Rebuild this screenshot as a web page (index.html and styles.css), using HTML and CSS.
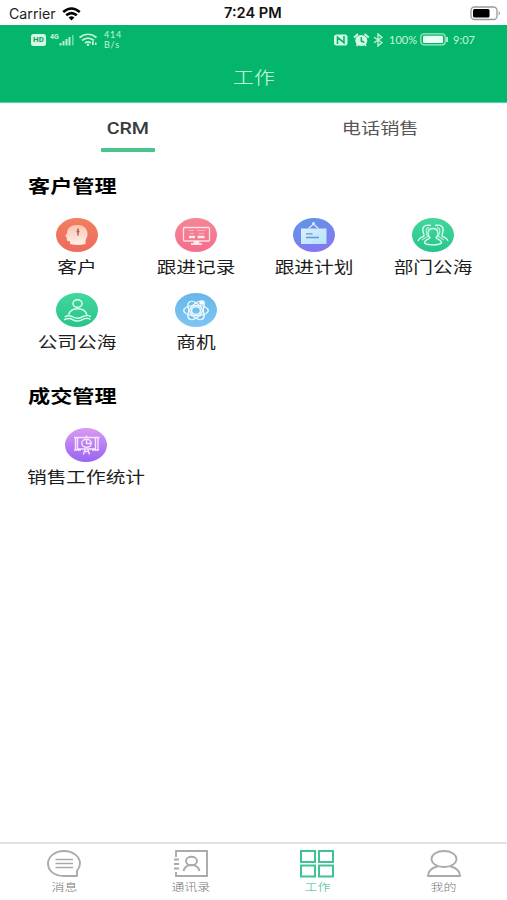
FILE: index.html
```
<!DOCTYPE html>
<html lang="zh-CN">
<head>
<meta charset="utf-8">
<title>工作</title>
<link rel="stylesheet" href="styles.css">
</head>
<body>
<div class="carrier-bar">
  <div class="carrier"><span>Carrier</span>
    <svg width="19" height="14" viewBox="0 0 19 14" fill="none" stroke="#000" stroke-width="2.6"><path d="M1.2 5Q9.5-2 17.800 5M4.200 8.300Q9.500 3.800 14.800 8.300"/><path d="M6.600 10.400Q9.500 8 12.400 10.400L9.500 13.400Z" fill="#000" stroke="none"/></svg>
  </div>
  <div class="clock">7:24 PM</div>
  <div class="power">
    <svg width="31" height="15" viewBox="0 0 31 15"><rect x="1" y="1" width="26" height="12.5" rx="3.5" fill="#fff" stroke="#999" stroke-width="1.3"/><rect x="3" y="3" width="16.5" height="8.5" rx="1.5" fill="#000"/><path d="M28.7 4.8q2.4 2.4 0 4.8z" fill="#999"/></svg>
  </div>
</div>
<header class="header">
  <div class="phone-bar">
    <span class="hd">HD</span>
    <span class="net">4G</span>
    <svg class="signals" width="40" height="16" viewBox="27 0 40 16">
      <g fill="#b9efd3"><rect x="27.5" y="11" width="2" height="2.5"/><rect x="30.5" y="9" width="2" height="4.5"/><rect x="33.5" y="7" width="2" height="6.5"/><rect x="36.5" y="5" width="2" height="8.5"/><rect x="40" y="3" width="1.6" height="10.5" opacity=".6"/></g>
      <path d="M47.500 5.500Q56-1 64.500 5.500M50 8.500Q56 3.800 62 8.500M53 11Q56 8.800 59 11" fill="none" stroke="#c8f4dc" stroke-width="1.7"/><circle cx="56" cy="12.800" r="1.300" fill="#c8f4dc"/><path d="M60 13V9.500h1.800V13M63 13V10.500h1.500V13" fill="#c8f4dc"/>
    </svg>
    <div class="rate"><span>414</span><span>B/s</span></div>
    <svg class="device" width="50" height="14" viewBox="0 0 50 14">
      <g fill="#d5f7e5"><rect x="0" y="1.5" width="13.5" height="11" rx="2.5"/><ellipse cx="27.3" cy="7.5" rx="6" ry="5.5"/><path d="M20 4.500 24 1M30.500 1l4.300 3.500M22.500 13l1.500-2M32 13l-1.500-2" stroke="#d5f7e5" stroke-width="1.8"/></g>
      <path d="M3.500 11V4.300l6.500 5.400V3M27.300 4.200V8l3 1.500" stroke="#04b66b" stroke-width="1.6" fill="none"/>
      <path d="M40 4.200l8 5.300-4 3.500V1l4 3.500-8 5.200" fill="none" stroke="#c8f4dc" stroke-width="1.3"/>
    </svg>
    <span class="percent">100%</span>
    <svg class="cell" width="29" height="13" viewBox="0 0 29 13"><rect x=".8" y=".8" width="24.4" height="11" rx="3" fill="none" stroke="#a5e9c7" stroke-width="1.2"/><rect x="3" y="2.7" width="20" height="7.3" rx="1" fill="#eafff4"/><path d="M27 4v5" stroke="#c8f4dc" stroke-width="1.7"/></svg>
    <span class="time">9:07</span>
  </div>
  <h1 class="title"><span class="wide">工作</span></h1>
</header>
<nav class="tabs">
  <div class="tab tab-active"><span class="wide">CRM</span></div>
  <div class="tab"><span class="wide">电话销售</span></div>
</nav>
<main class="content">
  <section>
    <h2><span class="wide">客户管理</span></h2>
    <div class="grid">
      <div class="item">
        <svg class="icon" viewBox="0 0 42 34"><defs><linearGradient id="g1" x2="0" y2="1"><stop stop-color="#f0805e"/><stop offset="1" stop-color="#ed6b5e"/></linearGradient><linearGradient id="head" x2="0" y2="1"><stop stop-color="#f9c4b2"/><stop offset="1" stop-color="#fff0e8"/></linearGradient></defs><ellipse cx="21" cy="17" rx="21" ry="17" fill="url(#g1)"/><path d="M14 26v-3q-3 1-3.300-2l0-2-1.700-.8 2-3C11 9.500 16 6.500 22 7c7 .5 10 5 9.500 10-.3 2.500-2 4-2 6.500V26q-8 2-15.500 0z" fill="url(#head)"/><path d="M22 10.500v7M20.500 13.500h3" fill="none" stroke="#a8645c" stroke-width="1.500"/></svg>
        <span class="wide">客户</span></div>
      <div class="item">
        <svg class="icon" viewBox="0 0 42 34"><defs><linearGradient id="g2" x2="0" y2="1"><stop stop-color="#f58794"/><stop offset="1" stop-color="#f56d8d"/></linearGradient></defs><ellipse cx="21" cy="17" rx="21" ry="17" fill="url(#g2)"/><rect x="8.500" y="9.500" width="26" height="13.500" rx="1" fill="none" stroke="#ffe0e6" stroke-width="1.300"/><path d="M19 23h5l.7 2.800h-6.400zM16 25.300h11V27H16z" fill="#ffe9ed"/><path d="M14 19h6M22.500 19h7" stroke="#ffe9ed" stroke-width="2.500"/><path d="M14 12.500h5M22 12.500h8M15 15.500h4M24 15.500h5" stroke="#f9b5c1" stroke-width="1.200"/></svg>
        <span class="wide">跟进记录</span></div>
      <div class="item">
        <svg class="icon" viewBox="0 0 42 34"><defs><linearGradient id="g3" x2=".4" y2="1"><stop stop-color="#5c98e6"/><stop offset="1" stop-color="#8478f0"/></linearGradient><linearGradient id="board" x2="1" y2="1"><stop stop-color="#d9f0ff"/><stop offset="1" stop-color="#b7e2fb"/></linearGradient></defs><ellipse cx="21" cy="17" rx="21" ry="17" fill="url(#g3)"/><path d="M15.500 10.500 20.500 6l5 4.500" fill="none" stroke="#d7edff" stroke-width="1.300"/><circle cx="20.500" cy="5.500" r="1.500" fill="#d7edff"/><path d="M8 10.500h25.500V26H8z" fill="url(#board)"/><path d="M13 15.800h6.500M13 19.500h13" stroke="#6798cc" stroke-width="1.300"/></svg>
        <span class="wide">跟进计划</span></div>
      <div class="item">
        <svg class="icon" viewBox="0 0 42 34"><defs><linearGradient id="g4" x2="0" y2="1"><stop stop-color="#43d79c"/><stop offset="1" stop-color="#27c58b"/></linearGradient></defs><ellipse cx="21" cy="17" rx="21" ry="17" fill="url(#g4)"/><g fill="none" stroke="#ddfff0" stroke-width="1.300"><path d="M18 19.500c-3-2-3-9 3-9s6 7 3 9c0 2 5.500 1.500 5.500 5.500-3 2.500-14 2.500-17 0 0-4 5.500-3.500 5.500-5.500z"/><path d="M19 7.500C13 6 10 9 11 13.500c.4 2 1.500 3 1 4.500-1.500 1.500-5 1.500-6 5M23 7.500c6-1.500 9 1.500 8 6-.4 2-1.500 3-1 4.500 1.500 1.500 5 1.500 6 5"/><path d="M17 9.500c-3.500.5-3.500 5-1.500 9l-5.500 3.500M25 9.500c3.500.5 3.500 5 1.500 9l5.500 3.500" opacity=".7"/></g></svg>
        <span class="wide">部门公海</span></div>
      <div class="item">
        <svg class="icon" viewBox="0 0 42 34"><ellipse cx="21" cy="17" rx="21" ry="17" fill="url(#g4)"/><g fill="none" stroke="#ddfff0" stroke-width="1.400"><ellipse cx="21.500" cy="10.500" rx="4.600" ry="3.800"/><path d="M12.500 22c1-4 4-6.300 9-6.300s8.500 2.300 9.500 6.300M8.500 24q4.500-2.500 8.500 0t9 0 9-.5M8 26.800q5-2.500 9 0t9 0 8.500-.5"/></g></svg>
        <span class="wide">公司公海</span></div>
      <div class="item">
        <svg class="icon" viewBox="0 0 42 34"><defs><linearGradient id="g5" x2="0" y2="1"><stop stop-color="#67b7eb"/><stop offset="1" stop-color="#7fc4f2"/></linearGradient></defs><ellipse cx="21" cy="17" rx="21" ry="17" fill="url(#g5)"/><g fill="none" stroke="#e8f8ff" stroke-width="1.200" transform="translate(21 17.500) scale(1.200 1)"><ellipse rx="10.200" ry="5.200"/><ellipse rx="10.200" ry="5.200" transform="rotate(60)"/><ellipse rx="10.200" ry="5.200" transform="rotate(-60)"/><circle r="3.800" stroke-width="1.400"/></g><ellipse cx="27" cy="9.500" rx="2.800" ry="2.300" fill="#f4fcff"/></svg>
        <span class="wide">商机</span></div>
    </div>
  </section>
  <section class="deals">
    <h2><span class="wide">成交管理</span></h2>
    <div class="stats item">
      <svg class="icon" viewBox="0 0 42 34"><defs><linearGradient id="g6" x2="0" y2="1"><stop stop-color="#d79bf2"/><stop offset="1" stop-color="#9963f4"/></linearGradient></defs><ellipse cx="21" cy="17" rx="21" ry="17" fill="url(#g6)"/><g fill="none" stroke="#f7e5ff" stroke-width="1.400"><path d="M9 9.500h25.500M12.500 10v11h18V10M10.500 9v13.500M33 9v13.500M9 22h7M27 22h7M21.500 7.500v2M20 21.500l-1.500 5M23 21.500l1.500 5M19 23.500h5"/><ellipse cx="21.500" cy="15.300" rx="4.800" ry="4"/><path d="M21.500 11v4.500h4.800"/></g></svg>
      <span class="wide">销售工作统计</span>
    </div>
  </section>
</main>
<footer class="tabbar">
  <div class="dock">
    <svg width="34" height="28" viewBox="0 0 34 28" fill="none" stroke="#aaa" stroke-width="1.900"><path d="M30 26H17C7 26 1 20.500 1 13.500S8 1 17 1s16 5.500 16 12.500c0 3.500-1.500 5.500-3 7.500z" stroke-linejoin="round"/><path d="M8.500 9.500H26M8.500 13.500H26M8.500 17.500H26" stroke-width="1.300"/></svg>
    <span class="label wide">消息</span></div>
  <div class="dock">
    <svg width="34" height="28" viewBox="0 0 34 28" fill="none" stroke="#aaa" stroke-width="1.900"><path d="M2 7V1h31v25H2v-4M0 9.500h5M0 14h5M0 18.500h5"/><ellipse cx="17.500" cy="11" rx="5.500" ry="4.200"/><path d="M9.500 21c1-4 4-6 8-6s7 2 8 6"/></svg>
    <span class="label wide">通讯录</span></div>
  <div class="dock dock-active">
    <svg width="34" height="28" viewBox="0 0 34 28" fill="none" stroke="#3cc493" stroke-width="2"><path d="M1 1h14v11H1zM19 1h14v11H19zM1 15.500h14v11H1zM19 15.500h14v11H19z"/></svg>
    <span class="label wide">工作</span></div>
  <div class="dock">
    <svg width="34" height="28" viewBox="0 0 34 28" fill="none" stroke="#aaa" stroke-width="1.800"><ellipse cx="17" cy="9" rx="12.500" ry="8"/><path d="M10.500 16.500C4 18 1 21 1 26h32c0-5-3-8-9.500-9.500"/></svg>
    <span class="label wide">我的</span></div>
</footer>
</body>
</html>
```
FILE: styles.css
```
* { box-sizing: border-box; }
body {
  margin: 0;
  height: 900px;
  display: flex;
  flex-direction: column;
  overflow: hidden;
  background: #fff;
  color: #1c1c1c;
  font-family: Roboto, "Noto Sans CJK SC", sans-serif;
}
svg { display: block; flex: none; }
.carrier-bar {
  height: 25px;
  padding: 1px 6px 0 9px;
  display: grid;
  grid-template-columns: 215px auto 1fr;
  align-items: center;
  font: 14.2px/25px Inter, sans-serif;
  color: #222;
}
.carrier { display: flex; align-items: center; gap: 6px; }
.clock { font-weight: 600; font-size: 14.6px; color: #111; }
.power { display: flex; justify-content: flex-end; }
.header { height: 78px; background: #04b66b; border-bottom: 1px solid #65ceb0; }
.phone-bar {
  height: 29px;
  padding: 0 31px;
  display: flex;
  align-items: center;
  color: #c8f4dc;
}
.hd {
  width: 15px;
  height: 12px;
  border-radius: 2.5px;
  background: #d5f7e5;
  color: #04a660;
  font: bold 8px/12px Roboto, sans-serif;
  text-align: center;
}
.net { width: 9px; height: 14px; margin-left: 4px; font: bold 7px/8px Roboto, sans-serif; }
.rate {
  margin-left: 5px;
  width: 21px;
  display: flex;
  flex-direction: column;
  font: 9px/10px Lato, sans-serif;
  letter-spacing: .8px;
}
.device { margin-left: auto; }
.percent { width: 29px; margin-left: 5px; font: 11px/14px Lato, sans-serif; }
.cell { margin-left: 2px; }
.time { width: 24px; margin: 0 -1px 0 4px; font: 11px/14px Lato, sans-serif; }
.title {
  margin: 11px 0 0;
  text-align: center;
  font: 300 17px/24px "Noto Sans CJK SC", sans-serif;
  color: #dcfaea;
}
.wide { display: inline-block; white-space: nowrap; transform: scaleX(1.23); }
.tabs { height: 50px; padding-left: 1px; display: flex; border-top: 1px solid #e4fcf9; }
.tab {
  flex: 1;
  padding-top: 14px;
  display: flex;
  flex-direction: column;
  align-items: center;
  font-size: 15.6px;
  line-height: 22px;
  color: #555;
}
.tab-active { font-weight: 500; color: #3a3a3a; }
.tab-active .wide { transform: scaleX(1.26); }
.tab-active::after {
  content: "";
  width: 54px;
  height: 4px;
  margin-top: 8px;
  border-radius: 1px;
  background: #4cc38c;
}
.content { flex: 1; }
h2 { margin: 0; padding: 21px 0 0 28px; display: flex; font-size: 18px; line-height: 26px; color: #000; }
h2 .wide { transform-origin: left; }
.grid { margin: 18px 15px 0 18px; display: grid; grid-template-columns: repeat(4, 1fr); grid-auto-rows: 75px; }
.item { display: flex; flex-direction: column; align-items: center; font-size: 16px; line-height: 24px; }
.icon { width: 42px; height: 34px; margin-bottom: 4px; }
.deals h2 { padding-top: 16px; }
.stats { width: 118px; margin: 18px 0 0 27px; }
.tabbar { height: 58px; padding: 6px 0 0 1px; display: flex; border-top: 2px solid #e4e4e4; }
.dock { flex: 1; display: flex; flex-direction: column; align-items: center; }
.label { margin-top: 1px; font: 300 10.5px/15px "Noto Sans CJK SC", sans-serif; color: #777; }
.dock-active .label { color: #2fb989; }
```
